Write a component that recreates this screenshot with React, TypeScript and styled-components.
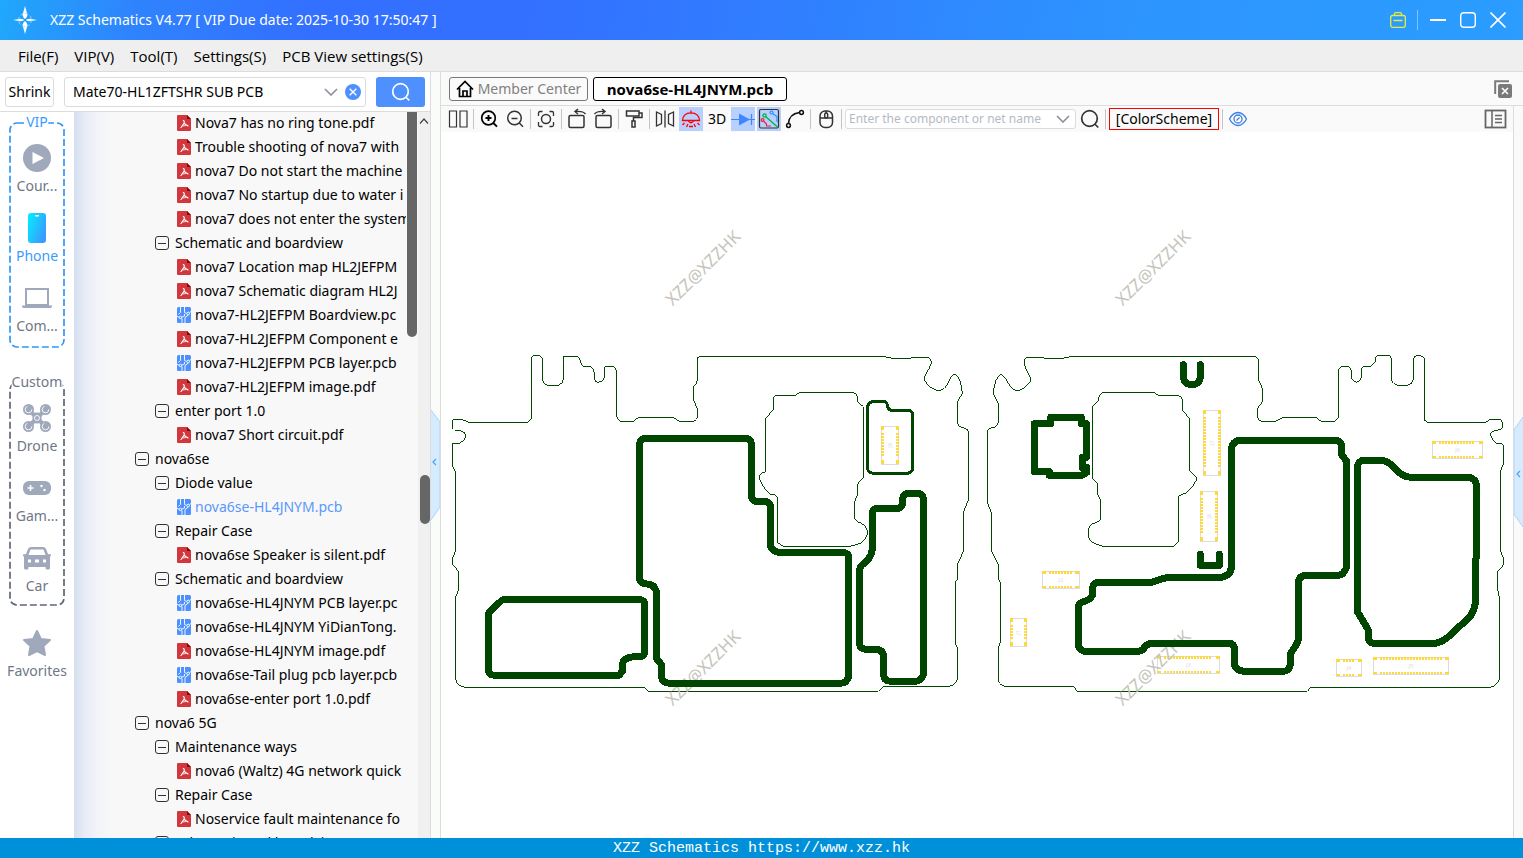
import React from "react";
import styled, { createGlobalStyle } from "styled-components";

const sans = `"Noto Sans", "Open Sans", sans-serif`;
const wideSans = `"Open Sans", "Noto Sans", sans-serif`;
const line = "#dcdcdc";
const navGrey = "#a0a8bc";
const boardGreen = "#004600";

const GlobalStyle = createGlobalStyle`
  *, *::before, *::after { box-sizing: border-box; }
  body { margin: 0; background: #fff; font: 14px/20px ${sans}; color: #000; overflow: hidden; }
  button, input { font: inherit; color: inherit; margin: 0; }
  button { border: 0; background: none; padding: 0; cursor: pointer; }
  svg { display: block; flex: none; }
  ul { list-style: none; margin: 0; padding: 0; }
`;

const Window = styled.div`
  display: flex;
  flex-direction: column;
  height: 100vh;
`;

/* ---------- title bar ---------- */

const TitleBar = styled.header`
  display: flex;
  align-items: center;
  flex: none;
  height: 40px;
  padding: 0 10px 0 12px;
  color: #fff;
  background: linear-gradient(100deg, #20a8fb 0%, #2f83fd 9%, #3370ff 20%, #3370ff 35%, #307fff 52%, #2d95fe 75%, #2b9dff 100%);
`;

const Title = styled.h1`
  flex: 1;
  margin: 0 0 0 12px;
  font-size: 14px;
  font-weight: 400;
  line-height: 20px;
  white-space: nowrap;
`;

const WindowButton = styled.button`
  display: grid;
  place-items: center;
  width: 30px;
  height: 30px;
`;

const TitleDivider = styled.span`
  width: 1px;
  height: 20px;
  margin: 0 5px 0 4px;
  background: rgba(255, 255, 255, 0.4);
`;

/* ---------- menu bar ---------- */

const MenuBar = styled.nav`
  display: flex;
  align-items: center;
  flex: none;
  gap: 16px;
  height: 32px;
  padding: 0 18px;
  font: 15px/20px ${wideSans};
  background: #efefef;
  border-bottom: 1px solid ${line};
`;

const MenuButton = styled.button`
  height: 24px;
  white-space: nowrap;
`;

/* ---------- main split ---------- */

const Main = styled.main`
  display: flex;
  flex: 1;
  min-height: 0;
`;

const Sidebar = styled.aside`
  display: flex;
  flex-direction: column;
  flex: none;
  width: 431px;
  border-right: 1px solid ${line};
`;

const SearchRow = styled.form`
  display: flex;
  align-items: center;
  flex: none;
  height: 40px;
  padding: 0 5px;
  border-bottom: 1px solid ${line};
`;

const ShrinkButton = styled.button`
  width: 49px;
  height: 30px;
  background: #fff;
  border: 1px solid ${line};
  border-radius: 3px;
`;

const ComboBox = styled.div`
  display: flex;
  align-items: center;
  flex: 1;
  height: 30px;
  margin: 0 10px;
  padding: 0 2px 0 8px;
  gap: 2px;
  background: #fff;
  border: 1px solid ${line};
  border-radius: 3px;
`;

const TextField = styled.input`
  flex: 1;
  min-width: 0;
  padding: 0;
  border: 0;
  outline: 0;
  background: none;
  &::placeholder { color: #b4bac4; opacity: 1; }
`;

const FieldButton = styled.button`
  display: grid;
  place-items: center;
  width: 20px;
  height: 20px;
`;

const SearchButton = styled.button`
  display: grid;
  place-items: center;
  width: 49px;
  height: 30px;
  border-radius: 3px;
  background: #4d90fe;
`;

const SidebarBody = styled.div`
  display: flex;
  flex: 1;
  min-height: 0;
`;

/* ---------- category rail ---------- */

const Rail = styled.nav`
  display: flex;
  flex-direction: column;
  align-items: center;
  flex: none;
  width: 74px;
  padding-top: 10px;
  background: #fff;
`;

const Group = styled.section<{ $tone: string; $bottom: number }>`
  position: relative;
  display: flex;
  flex-direction: column;
  gap: 12px;
  width: 56px;
  padding: 16px 0 ${(p) => p.$bottom}px;
  color: ${(p) => p.$tone};

  & + & { margin: 34px 0 17px; }
`;

const GroupFrame = styled.svg`
  position: absolute;
  inset: 1px;
  width: calc(100% - 2px);
  height: calc(100% - 2px);
  overflow: visible;
`;

const GroupLabel = styled.h2`
  position: absolute;
  top: -10px;
  left: 50%;
  transform: translateX(-50%);
  margin: 0;
  font-size: 14px;
  font-weight: 400;
  line-height: 20px;
  background: #fff;
`;

const RailButton = styled.button<{ $active?: boolean }>`
  position: relative;
  display: flex;
  flex-direction: column;
  align-items: center;
  gap: 3px;
  height: 58px;
  padding-top: 5px;
  color: ${(p) => (p.$active ? "#3a9bff" : "#6f7786")};
`;

const RailIcon = styled.span`
  display: grid;
  place-items: center;
  height: 30px;
`;

/* ---------- tree ---------- */

const TreePane = styled.div`
  display: flex;
  flex: 1;
  min-width: 0;
  background: linear-gradient(90deg, #d5e0f0 0, #e6ebf5 10px, #f2f4f8 24px, #f8f8f8 38px);
`;

const Tree = styled.ul`
  flex: 1;
  min-width: 0;
  overflow: hidden;
`;

const TreeRow = styled.li<{ $level: number }>`
  display: flex;
  align-items: center;
  height: 24px;
  padding-left: ${(p) => [0, 61, 81, 103][p.$level]}px;

  &:first-child { margin-top: -1px; }
`;

const Toggle = styled.button`
  display: grid;
  place-items: center;
  flex: none;
  width: 14px;
  height: 14px;
  margin-right: 6px;
  border: 1px solid #333;
  border-radius: 3px;

  &::before { content: ""; width: 8px; height: 1px; background: #333; }
`;

const FileButton = styled.button<{ $selected: boolean }>`
  display: flex;
  align-items: center;
  gap: 4px;
  white-space: nowrap;
  color: ${(p) => (p.$selected ? "#5b97fb" : "#000")};
`;

const Scrollbar = styled.div<{ $rows: string; $width: number; $track: string }>`
  display: grid;
  grid-template-rows: ${(p) => p.$rows};
  flex: none;
  width: ${(p) => p.$width}px;
  margin-left: 1px;
  background: ${(p) => p.$track};
`;

const Thumb = styled.div<{ $row: number; $flatTop?: boolean }>`
  grid-row: ${(p) => p.$row};
  justify-self: end;
  width: 10px;
  border-radius: ${(p) => (p.$flatTop ? "0 0 5px 5px" : "5px")};
  background: #666;
`;

const ScrollArrow = styled.button`
  display: grid;
  place-items: center;
`;

/* ---------- splitter ---------- */

const Splitter = styled.div`
  display: flex;
  align-items: center;
  flex: none;
  width: 10px;
  padding-top: 20px;
  background: #f9fcf9;
  border-right: 1px solid ${line};
`;

const RightEdge = styled.div`
  display: flex;
  align-items: center;
  flex: none;
  width: 10px;
  background: #fafafa;
  border-left: 1px solid ${line};
`;

/* ---------- workspace ---------- */

const Workspace = styled.section`
  display: flex;
  flex-direction: column;
  flex: 1;
  min-width: 0;
  background: #fff;
`;

const TabBar = styled.div`
  display: flex;
  align-items: center;
  flex: none;
  gap: 5px;
  height: 34px;
  padding: 0 11px 0 8px;
  background: #fafafa;
  border-bottom: 1px solid ${line};
`;

const Tab = styled.button<{ $active?: boolean }>`
  display: flex;
  align-items: center;
  justify-content: center;
  gap: 4px;
  width: ${(p) => (p.$active ? 194 : 139)}px;
  height: 24px;
  border: 1px solid ${(p) => (p.$active ? "#000" : "#777")};
  border-radius: 3px;
  background: ${(p) => (p.$active ? "#fff" : "#fafafa")};
  color: ${(p) => (p.$active ? "#000" : "#808080")};
  font: ${(p) => (p.$active ? `700 15px/20px ${wideSans}` : `14px/20px ${sans}`)};
  white-space: nowrap;
`;

const Spacer = styled.span`
  flex: 1;
`;

const ViewArea = styled.div`
  display: flex;
  flex: 1;
  min-height: 0;
`;

const ViewColumn = styled.div`
  display: flex;
  flex-direction: column;
  flex: 1;
  min-width: 0;
`;

const Toolbar = styled.div`
  display: flex;
  align-items: center;
  flex: none;
  gap: 2px;
  height: 26px;
  padding: 0 5px;
  background: #fafafa;
`;

const ToolButton = styled.button<{ $on?: boolean }>`
  display: grid;
  place-items: center;
  flex: none;
  width: 24px;
  height: 24px;
  background: ${(p) => (p.$on ? "#b7d0fd" : "none")};
`;

const ToolDivider = styled.span`
  flex: none;
  width: 1px;
  height: 20px;
  margin: 0 1px;
  background: #c4c4c4;
`;

const NetSearch = styled.div`
  display: flex;
  align-items: center;
  flex: none;
  gap: 2px;
  width: 231px;
  height: 20px;
  padding: 0 2px 0 3px;
  font-size: 12px;
  background: #fff;
  border: 1px solid ${line};
  border-radius: 3px;
`;

const SchemeButton = styled.button`
  flex: none;
  width: 110px;
  height: 22px;
  border: 1px solid #f00;
`;

const Canvas = styled.svg`
  flex: 1;
  width: 100%;
  min-height: 0;
`;

const WatermarkText = styled.text`
  font: 17px ${sans};
  fill: #c6c4bc;
  text-anchor: middle;
`;

const RefText = styled.text`
  font: 18px ${sans};
  fill: #dedede;
  text-anchor: middle;
`;

/* ---------- footer ---------- */

const Footer = styled.footer`
  flex: none;
  height: 20px;
  padding-top: 1px;
  background: #0090da;
  color: #fff;
  font: 15px/20px "Liberation Mono", monospace;
  text-align: center;
`;

/* ---------- icons ---------- */

const Logo = () => (
  <svg width="26" height="30" viewBox="0 0 26 30" fill="#fff">
    <path d="M13 1 L15.500 10 L14 13.500 H12 L10.500 10 Z M13 29 L10.500 20 L12 16.500 H14 L15.500 20 Z" />
    <path d="M1 15 L8 13.700 L11.500 14.300 V15.700 L8 16.300 Z M25 15 L18 16.300 L14.500 15.700 V14.300 L18 13.700 Z" />
    <circle cx="13" cy="15" r="6.500" fill="none" stroke="#9fd4ff" strokeWidth="1" strokeDasharray="3 2" />
  </svg>
);

const Chevron = ({ color = "#8a8f98" }: { color?: string }) => (
  <svg width="14" height="8" viewBox="0 0 14 8" fill="none" stroke={color} strokeWidth="1.6">
    <path d="M1 1 L7 7 L13 1" />
  </svg>
);

const Magnifier = ({ color }: { color: string }) => (
  <svg width="20" height="20" viewBox="0 0 20 20" fill="none" stroke={color} strokeWidth="1.7">
    <circle cx="9.500" cy="9.500" r="7.800" />
    <path d="M14.800 15 L18.300 18.500" />
  </svg>
);

const PdfIcon = () => (
  <svg width="14" height="16" viewBox="0 0 14 16">
    <path d="M1 0 H10 L14 4 V15 Q14 16 13 16 H1 Q0 16 0 15 V1 Q0 0 1 0" fill="#d2373e" />
    <path d="M10 0 L14 4 H10 Z" fill="#7f0c12" />
    <path d="M6.300 5.500 Q7.500 5.500 7.200 8 L4 12.500 M7.200 8.500 L11 11" fill="none" stroke="#fff" strokeWidth="1.2" strokeLinecap="round" />
    <path d="M5.500 11 L9 10.500" stroke="#fff" strokeWidth="0.800" />
  </svg>
);

const PcbIcon = () => (
  <svg width="14" height="16" viewBox="0 0 14 16">
    <rect width="14" height="16" rx="1.500" fill="#4d90fe" />
    <g fill="none" stroke="#fff" strokeWidth="0.900">
      <path d="M3.500 0 V5.500 L1.500 7.500 M7.500 0 V5.500 L9.800 6.500 M4 10.500 L7.500 9 V7 M5 11.500 V16 M8 16 V10.500 L11.500 8 M0 9.500 L2.300 10.200 M14 4.500 L12.500 5.500" />
      <circle cx="11.200" cy="6.500" r="1.300" />
      <circle cx="3.400" cy="10.500" r="1.200" />
    </g>
  </svg>
);

const CourseIcon = () => (
  <svg width="30" height="30" viewBox="0 0 30 30">
    <circle cx="15" cy="15" r="14" fill={navGrey} />
    <path d="M10.500 9 L22 15 L10.500 21 Z" fill="#fff" strokeLinejoin="round" />
  </svg>
);

const PhoneIcon = () => (
  <svg width="18" height="30" viewBox="0 0 18 30">
    <defs>
      <linearGradient id="phone" x1="0" y1="0" x2="1" y2="0.600">
        <stop offset="0" stopColor="#00f0ff" />
        <stop offset="1" stopColor="#3a9bff" />
      </linearGradient>
    </defs>
    <rect width="18" height="30" rx="3" fill="url(#phone)" />
    <rect x="7" y="2" width="4" height="1.500" rx="0.700" fill="#fff" />
  </svg>
);

const LaptopIcon = () => (
  <svg width="30" height="22" viewBox="0 0 30 22">
    <rect x="4" y="2" width="22" height="16" fill="none" stroke={navGrey} strokeWidth="2" />
    <path d="M0 18.500 H30 V20 L28.500 21 H1.500 L0 20 Z" fill={navGrey} />
  </svg>
);

const DroneIcon = () => (
  <svg width="28" height="28" viewBox="0 0 28 28">
    <g fill={navGrey} stroke={navGrey}>
      <path d="M5.500 5.500 L22.500 22.500 M22.500 5.500 L5.500 22.500" strokeWidth="4" strokeLinecap="round" />
      {[[5.500, 5.500], [22.500, 5.500], [5.500, 22.500], [22.500, 22.500]].map(([x, y]) => (
        <g key={`${x}-${y}`}>
          <circle cx={x} cy={y} r="5.500" stroke="none" />
          <circle cx={x} cy={y} r="3.300" fill="none" stroke="#fff" strokeWidth="0.900" strokeDasharray="14 6" />
        </g>
      ))}
    </g>
    <rect x="9.500" y="8.500" width="9" height="11" rx="4" fill={navGrey} />
    <circle cx="14" cy="14" r="2.500" fill={navGrey} stroke="#fff" strokeWidth="0.900" />
  </svg>
);

const GameIcon = () => (
  <svg width="28" height="14" viewBox="0 0 28 14">
    <rect width="28" height="14" rx="6" fill={navGrey} />
    <path d="M4.500 7 H10.500 M7.500 4 V10" stroke="#fff" strokeWidth="1.600" />
    <circle cx="18.500" cy="5" r="1.200" fill="#fff" />
    <circle cx="21.500" cy="9" r="1.200" fill="#fff" />
  </svg>
);

const CarIcon = () => (
  <svg width="28" height="24" viewBox="0 0 28 24" fillRule="evenodd" fill={navGrey}>
    <path d="M8 1 H20 Q22 1 23 3 L25 8 L28 8.500 V10 L27 10.500 V22 Q27 23.500 25.500 23.500 H23.500 Q22.500 23.500 22.500 21 H5.500 Q5.500 23.500 4.500 23.500 H2.500 Q1 23.500 1 22 V10.500 L0 10 V8.500 L3 8 L5 3 Q6 1 8 1 M7.500 3.500 L5.500 9 H22.500 L20.500 3.500 Z M5 13.500 H8 V16.500 H5 Z M12 13.500 H16 V16.500 H12 Z M20 13.500 H23 V16.500 H20 Z" />
  </svg>
);

const StarIcon = () => (
  <svg width="30" height="28" viewBox="0 0 30 28">
    <path d="M15 2 L18.800 10 L28 11 L21.500 17 L23 26 L15 22 L7 26 L8.500 17 L2 11 L11.200 10 Z" fill={navGrey} stroke={navGrey} strokeWidth="2" strokeLinejoin="round" />
  </svg>
);

const Glyph = ({ children, color = "#333" }: { children: React.ReactNode; color?: string }) => (
  <svg width="24" height="24" viewBox="0 0 24 24" fill="none" stroke={color} strokeWidth="1.500">
    {children}
  </svg>
);

const HandleIcon = ({ both }: { both?: boolean }) => (
  <svg width="9" height="110" viewBox="0 0 9 110">
    <path
      d={both ? "M9 0 L0 13 V97 L9 110" : "M0 0 L9 12 V97 L0 110"}
      fill="#d6ebfe"
      stroke="#a9d5fb"
      strokeWidth="1"
    />
    <path d="M6 52 L3 55 L6 58" fill="none" stroke="#4aa3f5" strokeWidth="1.200" transform={both ? "translate(0 2)" : "translate(-1 -3)"} />
  </svg>
);

/* ---------- board drawing ---------- */

const outlines = [
  "M38 266 V239 H66 L88 247 H262 L274 238 V60 Q274 48 283 46 H294 Q307 48 307 62 V120 Q309 132 322 136 H354 Q370 130 370 118 V49 H412 Q422 54 422 68 L430 79 H452 Q463 84 463 100 V118 Q466 127 476 127 Q493 122 493 108 V82 L500 79 H518 Q529 82 529 95 V228 Q532 240 541 244 H580 L594 233 H701 L718 244 H762 Q772 240 772 230 V205 L760 180 V140 Q772 130 772 120 V54 L780 49 H1325 L1360 55 H1412 L1416 52 H1462 Q1474 54 1474 68 Q1470 85 1460 98 Q1450 110 1454 122 Q1470 148 1497 152 Q1515 150 1525 128 Q1534 106 1542 103 Q1556 106 1562 130 L1567 160 L1552 185 V250 Q1556 262 1568 263 Q1585 266 1585 275 V480 L1571 515 V632 L1553 672 V715 L1546 728 V912 L1552 922 V1018 Q1545 1038 1525 1039 H1330 L1315 1054 H625 L612 1042 H78 Q50 1040 46 1015 V772 L55 752 V695 Q50 685 38 675 V655 L46 633 V395 L38 378 V310 H58 Q77 300 77 285 Q74 271 46 271",
  "M1002 172 L1008 166 H1065 L1082 157 H1240 Q1252 162 1252 172 V185 L1270 200 V412 Q1252 425 1252 440 V465 L1244 485 V535 Q1247 547 1262 549 Q1283 560 1283 580 Q1278 600 1262 610 L1230 619 H1030 L1013 608 V475 Q1010 463 990 462 Q978 455 968 435 Q958 425 958 408 Q962 398 977 395 V235 L1001 208 Z",
  "M1768 52 H1807 L1815 55 H1865 L1900 49 H2446 Q2456 54 2456 65 V120 L2467 145 V185 L2453 205 V232 Q2455 242 2465 244 H2507 L2528 233 H2630 L2643 244 H2685 L2696 232 V88 Q2700 79 2708 79 H2725 Q2734 84 2734 92 V115 Q2740 127 2750 127 Q2764 122 2764 108 V85 Q2766 79 2776 79 H2792 L2807 65 V52 Q2809 46 2815 46 H2848 Q2854 50 2854 58 V118 Q2858 134 2875 136 H2900 Q2920 132 2920 115 V55 Q2924 46 2935 46 Q2953 48 2953 60 V240 L2963 247 H3137 L3150 238 H3180 Q3187 240 3187 250 V262 Q3184 271 3170 271 Q3152 274 3152 285 Q3155 300 3168 310 H3185 Q3190 312 3190 318 V372 L3181 395 V630 L3190 655 V675 L3173 695 V750 L3178 772 V1018 Q3170 1040 3148 1042 H2612 L2602 1054 H1912 L1900 1039 H1697 Q1680 1036 1676 1025 V920 L1681 905 V728 L1675 715 V675 L1655 635 V520 L1643 490 V270 Q1650 262 1665 262 Q1675 255 1675 245 V190 L1660 160 Q1664 110 1684 103 Q1696 110 1702 125 Q1715 150 1730 152 Q1755 150 1772 122 Q1772 110 1762 95 Q1752 80 1753 60 Q1758 52 1768 52",
  "M1990 157 H2142 L2155 166 H2215 Q2227 170 2227 180 V210 L2248 235 V390 Q2270 410 2270 418 Q2262 440 2240 458 Q2218 466 2216 470 V605 L2200 619 H1990 Q1950 610 1946 592 Q1940 560 1960 550 Q1981 546 1981 535 V480 L1972 460 V430 L1958 415 V200 L1975 182 Q1976 160 1990 157",
];

const shields = [
  "M193 779 H600 Q614 782 614 792 V938 Q610 949 600 950 Q565 948 550 962 Q547 975 548 992 L537 1006 H163 Q146 1004 146 993 V825 Q146 817 152 812 L180 786 Q186 779 193 779",
  "M617 295 H915 Q934 296 934 312 V468 Q936 484 955 485 H980 Q991 488 991 500 V617 Q997 637 1020 637 H1210 Q1226 640 1226 652 V1010 Q1220 1030 1200 1030 H690 Q665 1028 665 1010 V975 L649 955 V755 Q644 734 625 733 Q599 730 598 715 V315 Q600 296 617 295",
  "M1312 505 H1375 Q1387 500 1387 490 Q1386 462 1402 460 H1432 Q1450 462 1450 477 V1005 Q1442 1024 1425 1024 H1352 Q1331 1022 1331 1006 V950 Q1330 930 1310 928 H1277 Q1259 925 1259 912 V688 Q1262 675 1275 668 Q1298 648 1297 620 V520 Q1298 506 1312 505",
  "M1783 251 H1832 V232 H1924 V251 H1939 V352 H1927 V383 H1941 V397 L1924 406 H1828 V395 H1783 Z",
  "M2230 74 V112 Q2234 133 2250 133 H2261 Q2277 133 2281 112 V74",
  "M2281 643 V676 H2338 V643",
  "M1975 727 H2135 L2165 717 L2185 712 H2345 Q2374 705 2374 680 V327 Q2378 301 2405 301 H2690 Q2705 305 2705 320 V345 L2719 362 V682 Q2712 706 2693 706 H2597 Q2575 708 2575 730 V900 Q2570 915 2552 940 V972 Q2547 994 2530 994 H2412 Q2384 990 2384 972 V930 Q2384 911 2368 910 H2132 L2115 918 Q2110 934 2093 934 H1932 Q1915 927 1915 912 V797 Q1918 788 1935 784 Q1958 775 1958 760 V742 Q1962 727 1975 727",
  "M2772 361 H2825 Q2845 363 2865 385 Q2885 410 2912 412 H3088 Q3109 418 3109 435 V650 L3107 660 V785 Q3104 808 3090 830 L3022 893 Q3000 910 2980 910 H2802 Q2785 908 2785 893 V870 L2752 815 V380 Q2755 362 2772 361",
];

const smallShield =
  "M1300 184 H1333 Q1342 186 1342 200 Q1346 211 1357 211 H1405 Q1418 213 1418 225 V388 Q1412 400 1400 400 H1300 Q1283 398 1283 385 V200 Q1286 186 1300 184";

type Connector = { id: string; x: number; y: number; w: number; h: number };

const connectors: Connector[] = [
  { id: "J9", x: 1324, y: 259, w: 52, h: 114 },
  { id: "J7", x: 2290, y: 211, w: 52, h: 195 },
  { id: "J8", x: 2281, y: 454, w: 52, h: 150 },
  { id: "J2", x: 1807, y: 694, w: 111, h: 51 },
  { id: "J1", x: 1711, y: 835, w: 48, h: 84 },
  { id: "J3", x: 2152, y: 949, w: 187, h: 51 },
  { id: "J6", x: 2977, y: 304, w: 151, h: 51 },
  { id: "J4", x: 2689, y: 958, w: 76, h: 51 },
  { id: "J5", x: 2800, y: 952, w: 226, h: 51 },
];

const ConnectorPart = ({ id, x, y, w, h }: Connector) => {
  const upright = h > w;
  const length = upright ? h : w;
  const depth = upright ? w : h;
  const pads: [number, number][] = [[0, 12], [length - 12, 12]];
  for (let at = 21; at <= length - 24; at += 9) pads.push([at, 5]);
  return (
    <g transform={`translate(${x} ${y})`}>
      <rect x="0" y="0" width={w} height={h} fill="none" stroke="#dcdcdc" strokeWidth="3" />
      {pads.map(([at, size]) =>
        [0, depth - 8].map((side) => (
          <rect
            key={`${at}-${side}`}
            x={upright ? side : at}
            y={upright ? at : side}
            width={upright ? 9 : size}
            height={upright ? size : 8}
            fill="#ffd83c"
          />
        ))
      )}
      <RefText transform={`translate(${w / 2} ${h / 2}) rotate(${upright ? -90 : 0})`} dy="6">
        {id}
      </RefText>
    </g>
  );
};

const watermarks = [
  [703, 268],
  [1153, 268],
  [703, 668],
  [1153, 668],
];

const BoardView = () => (
  <Canvas viewBox="441 132 1072 706" role="img" aria-label="nova6se-HL4JNYM board">
    <g transform="translate(440 340) scale(0.333333)" fill="none" stroke={boardGreen}>
      <g strokeWidth="3" shapeRendering="crispEdges">
        {outlines.map((d) => <path key={d} d={d} />)}
      </g>
      <g shapeRendering="crispEdges" stroke="none">
        {connectors.map((c) => <ConnectorPart key={c.id} {...c} />)}
      </g>
    </g>
    {watermarks.map(([x, y]) => (
      <WatermarkText key={`${x}-${y}`} transform={`translate(${x} ${y}) rotate(-45)`} dy="6">
        XZZ@XZZHK
      </WatermarkText>
    ))}
    <g transform="translate(440 340) scale(0.333333)" fill="none" stroke={boardGreen} shapeRendering="crispEdges" strokeLinecap="round" strokeLinejoin="round">
      {shields.map((d) => <path key={d} d={d} strokeWidth="21" />)}
      <path d={smallShield} strokeWidth="9" />
    </g>
  </Canvas>
);

/* ---------- data ---------- */

type Kind = "folder" | "pdf" | "pcb";
type Node = { level: 1 | 2 | 3; kind: Kind; name: string };

const tree: Node[] = [
  { level: 3, kind: "pdf", name: "Nova7 has no ring tone.pdf" },
  { level: 3, kind: "pdf", name: "Trouble shooting of nova7 with" },
  { level: 3, kind: "pdf", name: "nova7 Do not start the machine" },
  { level: 3, kind: "pdf", name: "nova7 No startup due to water i" },
  { level: 3, kind: "pdf", name: "nova7 does not enter the system" },
  { level: 2, kind: "folder", name: "Schematic and boardview" },
  { level: 3, kind: "pdf", name: "nova7 Location map HL2JEFPM" },
  { level: 3, kind: "pdf", name: "nova7 Schematic diagram HL2J" },
  { level: 3, kind: "pcb", name: "nova7-HL2JEFPM Boardview.pc" },
  { level: 3, kind: "pdf", name: "nova7-HL2JEFPM Component e" },
  { level: 3, kind: "pcb", name: "nova7-HL2JEFPM PCB layer.pcb" },
  { level: 3, kind: "pdf", name: "nova7-HL2JEFPM image.pdf" },
  { level: 2, kind: "folder", name: "enter port 1.0" },
  { level: 3, kind: "pdf", name: "nova7 Short circuit.pdf" },
  { level: 1, kind: "folder", name: "nova6se" },
  { level: 2, kind: "folder", name: "Diode value" },
  { level: 3, kind: "pcb", name: "nova6se-HL4JNYM.pcb" },
  { level: 2, kind: "folder", name: "Repair Case" },
  { level: 3, kind: "pdf", name: "nova6se Speaker is silent.pdf" },
  { level: 2, kind: "folder", name: "Schematic and boardview" },
  { level: 3, kind: "pcb", name: "nova6se-HL4JNYM PCB layer.pc" },
  { level: 3, kind: "pcb", name: "nova6se-HL4JNYM YiDianTong." },
  { level: 3, kind: "pdf", name: "nova6se-HL4JNYM image.pdf" },
  { level: 3, kind: "pcb", name: "nova6se-Tail plug pcb layer.pcb" },
  { level: 3, kind: "pdf", name: "nova6se-enter port 1.0.pdf" },
  { level: 1, kind: "folder", name: "nova6 5G" },
  { level: 2, kind: "folder", name: "Maintenance ways" },
  { level: 3, kind: "pdf", name: "nova6 (Waltz) 4G network quick" },
  { level: 2, kind: "folder", name: "Repair Case" },
  { level: 3, kind: "pdf", name: "Noservice fault maintenance fo" },
  { level: 2, kind: "folder", name: "Schematic and boardview" },
];

const menus = ["File(F)", "VIP(V)", "Tool(T)", "Settings(S)", "PCB View settings(S)"];

const RailItem = ({ icon, label, active }: { icon: React.ReactNode; label: string; active?: boolean }) => (
  <RailButton $active={active}>
    <RailIcon>{icon}</RailIcon>
    {label}
  </RailButton>
);

const RailGroup = ({ label, tone, stroke, bottom, children }: { label: string; tone: string; stroke: string; bottom: number; children: React.ReactNode }) => (
  <Group $tone={tone} $bottom={bottom}>
    <GroupFrame>
      <rect width="100%" height="100%" rx="7" fill="none" stroke={stroke} strokeWidth="1.700" strokeDasharray="7 3" />
    </GroupFrame>
    <GroupLabel>{label}</GroupLabel>
    {children}
  </Group>
);

const activeFile = "nova6se-HL4JNYM.pcb";

export default function App() {
  return (
    <Window>
      <GlobalStyle />
      <TitleBar>
        <Logo />
        <Title>XZZ Schematics V4.77 [ VIP Due date: 2025-10-30 17:50:47 ]</Title>
        <WindowButton aria-label="Toolbox">
          <svg width="16" height="16" viewBox="0 0 16 16" fill="none" stroke="#e8ea3c" strokeWidth="1.300">
            <rect x="0.700" y="3.500" width="14.600" height="11.800" rx="2" />
            <path d="M4.500 3.500 V2 Q4.500 0.700 6 0.700 H10 Q11.500 0.700 11.500 2 V3.500 M3.500 8.500 H12.500" />
          </svg>
        </WindowButton>
        <TitleDivider />
        <WindowButton aria-label="Minimize">
          <svg width="16" height="16"><path d="M0 8 H16" stroke="#fff" strokeWidth="2" /></svg>
        </WindowButton>
        <WindowButton aria-label="Maximize">
          <svg width="16" height="16"><rect x="0.700" y="0.700" width="14.600" height="14.600" rx="3" fill="none" stroke="#fff" strokeWidth="1.400" /></svg>
        </WindowButton>
        <WindowButton aria-label="Close">
          <svg width="16" height="16"><path d="M0.500 0.500 L15.500 15.500 M15.500 0.500 L0.500 15.500" stroke="#fff" strokeWidth="1.600" /></svg>
        </WindowButton>
      </TitleBar>

      <MenuBar>
        {menus.map((m) => <MenuButton key={m}>{m}</MenuButton>)}
      </MenuBar>

      <Main>
        <Sidebar>
          <SearchRow onSubmit={(e) => e.preventDefault()}>
            <ShrinkButton type="button">Shrink</ShrinkButton>
            <ComboBox>
              <TextField aria-label="Model search" defaultValue="Mate70-HL1ZFTSHR SUB PCB" />
              <FieldButton type="button" aria-label="History"><Chevron /></FieldButton>
              <FieldButton type="button" aria-label="Clear">
                <svg width="16" height="16" viewBox="0 0 16 16">
                  <circle cx="8" cy="8" r="8" fill="#4d90fe" />
                  <path d="M4.700 4.700 L11.300 11.300 M11.300 4.700 L4.700 11.300" stroke="#fff" strokeWidth="1.400" />
                </svg>
              </FieldButton>
            </ComboBox>
            <SearchButton aria-label="Search"><Magnifier color="#fff" /></SearchButton>
          </SearchRow>

          <SidebarBody>
            <Rail>
              <RailGroup label="VIP" tone="#3a9bff" stroke="#2f97f7" bottom={12}>
                <RailItem icon={<CourseIcon />} label="Cour..." />
                <RailItem icon={<PhoneIcon />} label="Phone" active />
                <RailItem icon={<LaptopIcon />} label="Com..." />
              </RailGroup>
              <RailGroup label="Custom" tone="#6f7786" stroke="#5f6675" bottom={10}>
                <RailItem icon={<DroneIcon />} label="Drone" />
                <RailItem icon={<GameIcon />} label="Gam..." />
                <RailItem icon={<CarIcon />} label="Car" />
              </RailGroup>
              <RailItem icon={<StarIcon />} label="Favorites" />
            </Rail>

            <TreePane>
              <Tree>
                {tree.map((n, i) => (
                  <TreeRow key={i} $level={n.level}>
                    {n.kind === "folder" ? (
                      <>
                        <Toggle aria-label={`Collapse ${n.name}`} />
                        <span>{n.name}</span>
                      </>
                    ) : (
                      <FileButton $selected={n.name === activeFile}>
                        {n.kind === "pdf" ? <PdfIcon /> : <PcbIcon />}
                        {n.name}
                      </FileButton>
                    )}
                  </TreeRow>
                ))}
              </Tree>
              <Scrollbar $rows="31fr 69fr" $width={10} $track="transparent">
                <Thumb $row={1} $flatTop />
              </Scrollbar>
              <Scrollbar $rows="18px 345fr 49px 314fr" $width={12} $track="#f0f0f0">
                <ScrollArrow aria-label="Scroll up">
                  <svg width="10" height="6" viewBox="0 0 10 6" fill="none" stroke="#444" strokeWidth="1.200">
                    <path d="M1 5.500 L5 1 L9 5.500" />
                  </svg>
                </ScrollArrow>
                <Thumb $row={3} />
              </Scrollbar>
            </TreePane>
          </SidebarBody>
        </Sidebar>

        <Splitter><HandleIcon /></Splitter>

        <Workspace>
          <TabBar>
            <Tab>
              <svg width="18" height="18" viewBox="0 0 18 18" fill="none" stroke="#000" strokeWidth="1.700">
                <path d="M1 9.500 L9 1.500 L17 9.500 M3.500 8 V16.500 H14.500 V8 M7 16 V11 H11 V16" />
              </svg>
              Member Center
            </Tab>
            <Tab $active>{activeFile}</Tab>
            <Spacer />
            <button aria-label="Close all tabs">
              <svg width="18" height="18" viewBox="0 0 18 18">
                <path d="M1.200 14 V1.200 H15" fill="none" stroke="#7a7a7a" strokeWidth="2" />
                <rect x="4" y="4" width="14" height="14" rx="2" fill="#7a7a7a" />
                <path d="M8 8 L14 14 M14 8 L8 14" stroke="#fff" strokeWidth="1.600" />
              </svg>
            </button>
          </TabBar>

          <ViewArea>
            <ViewColumn>
              <Toolbar>
                <ToolButton aria-label="Split view"><Glyph><path strokeWidth="1.200" d="M3.500 4 H10.500 V20 H3.500 Z M14 4 H21 V20 H14 Z" /></Glyph></ToolButton>
                <ToolDivider />
                <ToolButton aria-label="Zoom in"><Glyph color="#000"><circle cx="11.500" cy="11" r="6.800" strokeWidth="1.700" /><path strokeWidth="1.900" d="M16.300 16 L20 19.700 M8.500 11 H14.500 M11.500 8 V14" /></Glyph></ToolButton>
                <ToolButton aria-label="Zoom out"><Glyph><circle cx="11.500" cy="11" r="6.800" /><path d="M16.300 16 L20 19.700 M8.500 11.500 H14.500" /></Glyph></ToolButton>
                <ToolDivider />
                <ToolButton aria-label="Fit to window"><Glyph><circle cx="12" cy="12" r="4.500" /><path strokeWidth="1.300" d="M4.500 9 V6 Q4.500 4.500 6 4.500 H8.500 M15.500 4.500 H18 Q19.500 4.500 19.500 6 V9 M19.500 15 V18 Q19.500 19.500 18 19.500 H15.500 M8.500 19.500 H6 Q4.500 19.500 4.500 18 V15" /></Glyph></ToolButton>
                <ToolDivider />
                <ToolButton aria-label="Rotate left"><Glyph><rect x="4" y="8.500" width="15" height="12" rx="1.500" /><path d="M20.500 7 Q18 3.800 10.500 4.500 M13 2 L10 4.500 L13 7" /></Glyph></ToolButton>
                <ToolButton aria-label="Rotate right"><Glyph><rect x="5" y="8.500" width="15" height="12" rx="1.500" /><path d="M3.500 7 Q6 3.800 13.500 4.500 M11 2 L14 4.500 L11 7" /></Glyph></ToolButton>
                <ToolDivider />
                <ToolButton aria-label="Paint"><Glyph><rect x="4.500" y="4" width="12.500" height="5" /><path d="M17 6 H20 V10.500 H11.500 V14 M10 14 H13 V20 H10 Z" /></Glyph></ToolButton>
                <ToolDivider />
                <ToolButton aria-label="Flip"><Glyph><path strokeWidth="1.300" d="M12 3.500 V20.500 M3.500 5 L8.500 7.500 V16.500 L3.500 19 Z M20.500 5 L15.500 7.500 V16.500 L20.500 19 Z" /></Glyph></ToolButton>
                <ToolButton $on aria-label="Light"><Glyph color="#f00"><path strokeWidth="1.300" d="M12 3.500 V6 M3.500 13.500 Q4 6 12 5.800 Q20 6 20.500 13.500 Z M9 13.500 Q12 18 15 13.500 M5.500 16 L3.500 18 M9 17 L7.500 20 M15 17 L16.500 20 M18.500 16 L20.500 18 M10 19.500 H14" /></Glyph></ToolButton>
                <ToolButton aria-label="3D view">3D</ToolButton>
                <ToolButton $on aria-label="Diode values"><Glyph color="#4087ff"><path strokeWidth="1.200" d="M0 12.500 H24 M20.500 7 V18" /><path stroke="none" fill="#4087ff" d="M8 6.500 L19 12.500 L8 18.500 Z" /></Glyph></ToolButton>
                <ToolButton $on aria-label="Net layers">
                  <Glyph>
                    <rect x="2.500" y="2.500" width="19" height="18.500" rx="1.500" strokeWidth="1.200" />
                    <path stroke="#00b53c" strokeWidth="1.300" d="M8.500 9.500 L20.500 20" /><circle stroke="#00b53c" strokeWidth="1.300" cx="7.500" cy="8.500" r="1.600" />
                    <path stroke="#2b8cff" strokeWidth="1.200" d="M15.500 6.500 L20 9.500 V15" /><circle stroke="#2b8cff" strokeWidth="1.200" cx="14.500" cy="5.500" r="1.500" />
                    <path stroke="#f0223a" strokeWidth="1.200" d="M6.500 14 L9.500 17 V19 H14" /><circle stroke="#f0223a" strokeWidth="1.200" cx="5.500" cy="13" r="1.400" />
                  </Glyph>
                </ToolButton>
                <ToolButton aria-label="Trace"><Glyph color="#111"><circle cx="5.500" cy="18.500" r="1.900" /><circle cx="18.500" cy="5.500" r="1.900" /><path strokeWidth="1.700" d="M5.500 16.500 Q6 7 16.500 5.500" /></Glyph></ToolButton>
                <ToolDivider />
                <ToolButton aria-label="Mouse settings"><Glyph><rect x="6" y="4" width="12.500" height="16.500" rx="5" /><path d="M6 11 H18.500 M12.200 4 V6" /><rect x="10.700" y="6" width="3" height="5" rx="1.500" /></Glyph></ToolButton>
                <ToolDivider />
                <NetSearch>
                  <TextField aria-label="Component or net name" placeholder="Enter the component or net name" />
                  <FieldButton aria-label="Recent searches"><Chevron /></FieldButton>
                </NetSearch>
                <ToolButton aria-label="Find"><Magnifier color="#333" /></ToolButton>
                <ToolDivider />
                <SchemeButton>[ColorScheme]</SchemeButton>
                <ToolDivider />
                <ToolButton aria-label="Visibility"><Glyph color="#3b7fe0"><path strokeWidth="1.300" d="M3.500 12 Q7 5.500 12 5.500 Q17 5.500 20.500 12 Q17 18.500 12 18.500 Q7 18.500 3.500 12 Z" /><circle strokeWidth="1.300" cx="12" cy="12" r="4" /><path strokeWidth="1.300" d="M10.500 13.500 L13.500 10.500" /></Glyph></ToolButton>
                <Spacer />
                <ToolButton aria-label="Side panel"><Glyph color="#666"><rect x="1.500" y="3.500" width="20" height="17" strokeWidth="1.800" /><path d="M8 3.500 V20.500 M11 8.500 H18 M11 12 H18 M11 15.500 H18" /></Glyph></ToolButton>
              </Toolbar>
              <BoardView />
            </ViewColumn>
            <RightEdge><HandleIcon both /></RightEdge>
          </ViewArea>
        </Workspace>
      </Main>

      <Footer>XZZ Schematics https://www.xzz.hk</Footer>
    </Window>
  );
}
